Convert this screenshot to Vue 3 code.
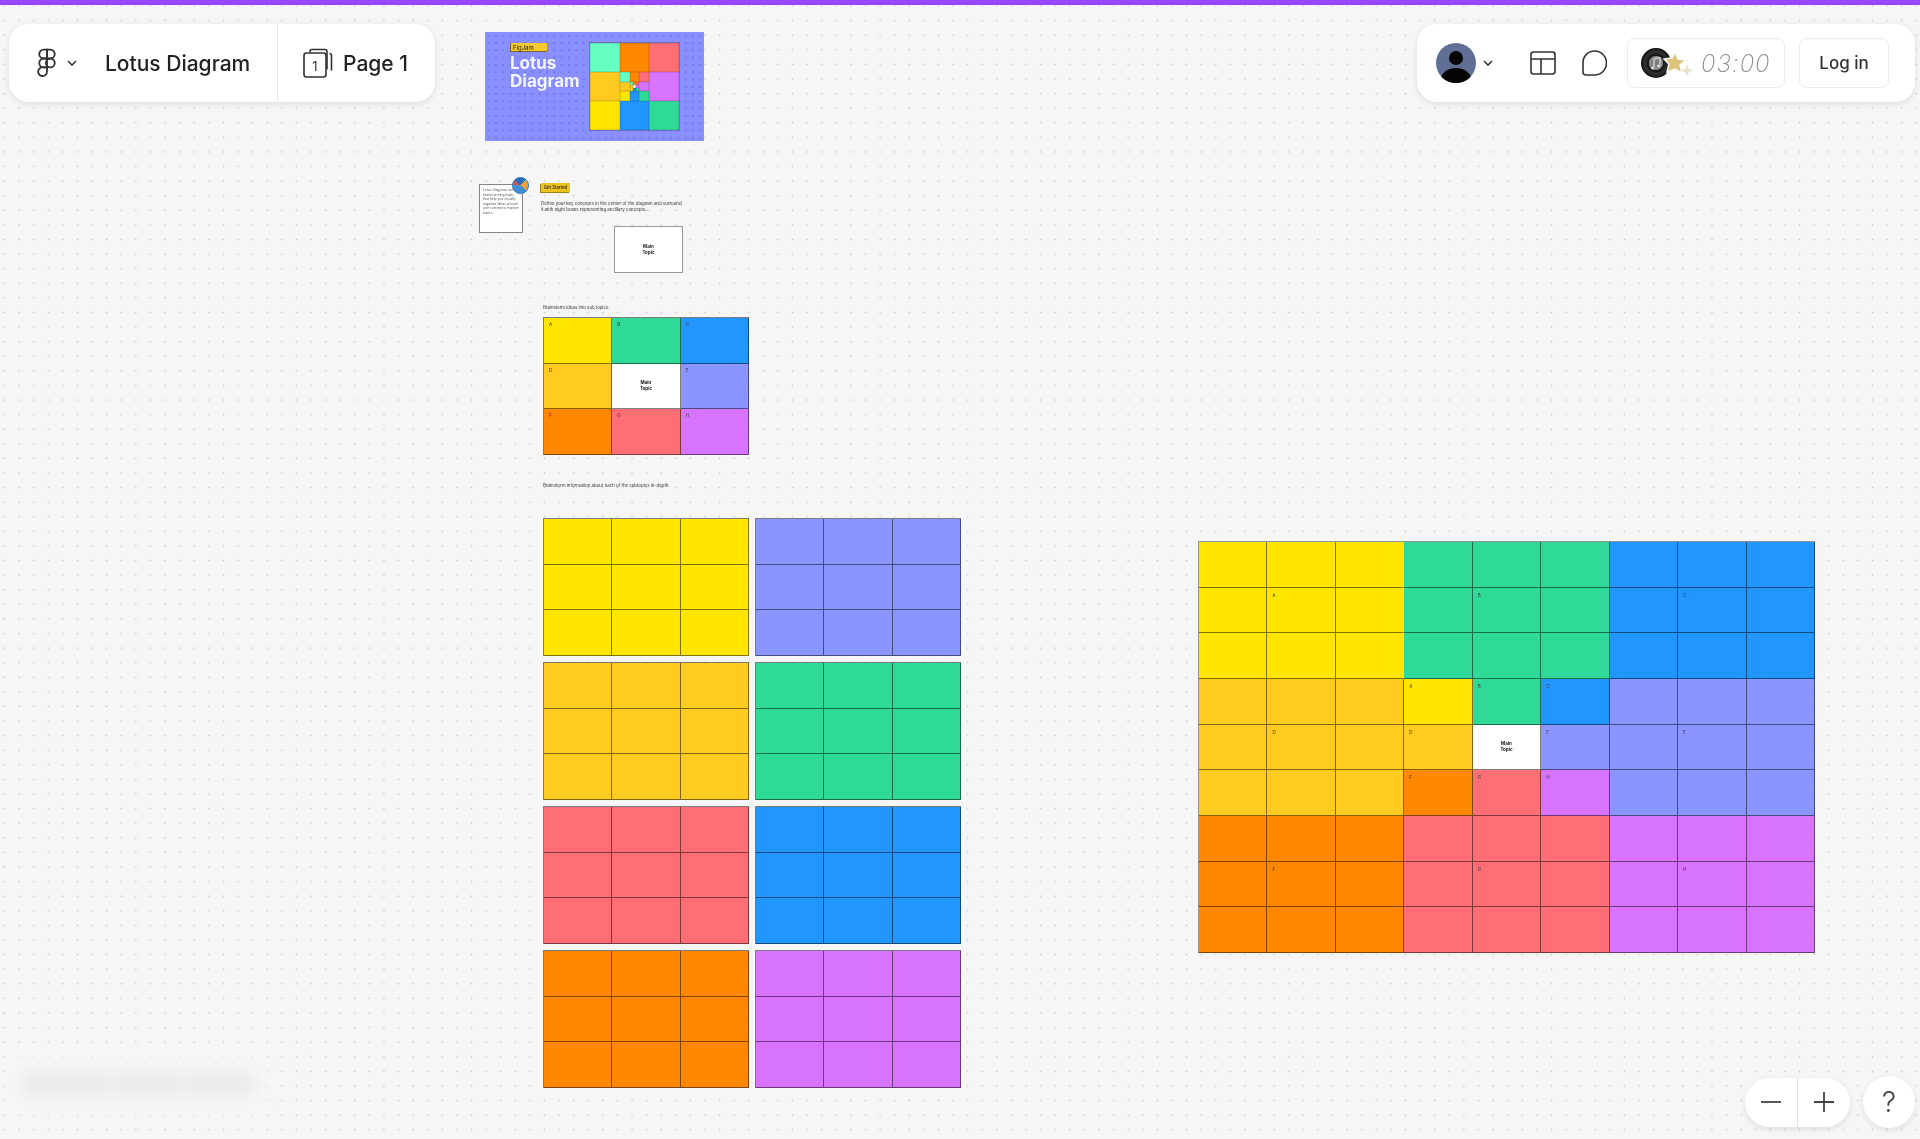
<script setup>
const LAYOUT = [
  ['yellow', 'A'], ['green', 'B'], ['blue', 'C'],
  ['amber', 'D'], ['white', ''], ['peri', 'E'],
  ['orange', 'F'], ['coral', 'G'], ['purple', 'H'],
]

// Starter grid: one 3x3 of labelled tiles.
const starter = LAYOUT.map(([color, label]) => ({ color, label }))

// Left column of blank 3x3 blocks, row by row.
const blocks = ['yellow', 'peri', 'amber', 'green', 'coral', 'blue', 'orange', 'purple']

// Finished 9x9 diagram.
const lotus = []
for (let r = 0; r < 9; r++) {
  for (let c = 0; c < 9; c++) {
    const br = Math.floor(r / 3)
    const bc = Math.floor(c / 3)
    const isCenterBlock = br === 1 && bc === 1
    const entry = isCenterBlock ? LAYOUT[(r - 3) * 3 + (c - 3)] : LAYOUT[br * 3 + bc]
    const isBlockMiddle = r % 3 === 1 && c % 3 === 1
    lotus.push({
      color: entry[0],
      label: isCenterBlock ? entry[1] : isBlockMiddle ? entry[1] : '',
      main: isCenterBlock && entry[0] === 'white',
      noRightLine: r < 3 && c === 2,
    })
  }
}

const mosaic = ['teal', 'orange', 'coral', 'amber', 'nest', 'purple', 'yellow', 'blue', 'green']
</script>

<template>
  <div class="page">
    <div class="topline"></div>

    <!-- Canvas items -->
    <div class="thumb">
      <div class="thumb-copy">
        <span class="thumb-tag">FigJam</span>
        <span class="thumb-title">Lotus<br />Diagram</span>
      </div>
      <div class="mos">
        <template v-for="(a, i) in mosaic" :key="i">
          <div v-if="a !== 'nest'" :class="a"></div>
          <div v-else class="mos inner">
            <template v-for="(b, j) in mosaic" :key="j">
              <div v-if="b !== 'nest'" :class="b"></div>
              <div v-else class="mos inner">
                <template v-for="(d, k) in mosaic" :key="k">
                  <div :class="d === 'nest' ? 'white' : d"></div>
                </template>
              </div>
            </template>
          </div>
        </template>
      </div>
    </div>

    <div class="note">
      <p>Lotus Diagrams are brainstorming maps that help you visually organize ideas around one concept to explore topics.</p>
      <span class="note-badge"></span>
    </div>
    <span class="tag">Get Started</span>
    <p class="hint define">Define your key concepts in the center of the diagram and surround<br />it with eight boxes representing ancillary concepts...</p>
    <div class="main-box"><b>Main<br />Topic</b></div>

    <p class="hint sub">Brainstorm ideas into sub topics.</p>
    <div class="grid3 starter">
      <div v-for="c in starter" :key="c.color" class="cell" :class="c.color">
        <span v-if="c.label" class="letter">{{ c.label }}</span>
        <b v-else class="main-label">Main<br />Topic</b>
      </div>
    </div>

    <p class="hint depth">Brainstorm information about each of the subtopics in-depth.</p>
    <div class="blocks">
      <div v-for="b in blocks" :key="b" class="grid3 block">
        <div v-for="n in 9" :key="n" class="cell" :class="b"></div>
      </div>
    </div>

    <div class="lotus">
      <div
        v-for="(c, i) in lotus"
        :key="i"
        class="lcell"
        :class="[c.color, { open: c.noRightLine }]"
      >
        <b v-if="c.main" class="main-label">Main<br />Topic</b>
        <span v-else-if="c.label" class="letter">{{ c.label }}</span>
      </div>
    </div>

    <div class="smudge">
      <i class="s1"></i><i class="s2"></i><i class="s3"></i>
    </div>

    <!-- Left toolbar -->
    <header class="bar left-bar">
      <div class="file">
        <svg class="figma" viewBox="0 0 24 36" fill="none" stroke="#333" stroke-width="2.2">
          <path d="M12 2H8a5.3 5.3 0 0 0 0 10.6h4z" />
          <path d="M12 2h4a5.3 5.3 0 0 1 0 10.6h-4z" />
          <path d="M12 12.6H8a5.3 5.3 0 0 0 0 10.6h4z" />
          <circle cx="16" cy="17.9" r="5.3" />
          <path d="M8 23.2a5.3 5.3 0 1 0 4 5.1v-5.1z" />
        </svg>
        <svg class="chev" viewBox="0 0 10 6" fill="none" stroke="#333" stroke-width="1.6">
          <path d="M1 1l4 4 4-4" />
        </svg>
        <span class="title">Lotus Diagram</span>
      </div>
      <div class="pages">
        <svg class="page-ico" viewBox="0 0 30 30" fill="none" stroke="#333" stroke-width="1.6">
          <path d="M7 4.5V3.5a2 2 0 0 1 2-2h13a2 2 0 0 1 2 2v18" />
          <path d="M26.5 5.5a2 2 0 0 1 2 2v15" />
          <rect x="1" y="5" width="22" height="24" rx="2.5" />
          <text x="12" y="23" text-anchor="middle" class="page-num">1</text>
        </svg>
        <span class="title">Page 1</span>
      </div>
    </header>

    <!-- Right toolbar -->
    <header class="bar right-bar">
      <div class="avatar-wrap">
        <svg class="avatar" viewBox="0 0 40 40">
          <defs>
            <clipPath id="av"><circle cx="20" cy="20" r="20" /></clipPath>
          </defs>
          <circle cx="20" cy="20" r="20" fill="#5f6f96" />
          <g clip-path="url(#av)">
            <circle cx="20" cy="15" r="7" fill="#050505" />
            <ellipse cx="20" cy="36" rx="15" ry="11" fill="#050505" />
          </g>
        </svg>
        <svg class="chev" viewBox="0 0 10 6" fill="none" stroke="#333" stroke-width="1.6">
          <path d="M1 1l4 4 4-4" />
        </svg>
      </div>
      <svg class="tool layout" viewBox="0 0 26 24" fill="none" stroke="#333" stroke-width="1.6">
        <rect x="1" y="1" width="24" height="22" rx="2.5" />
        <path d="M1 8h24M11 8v15" />
      </svg>
      <svg class="tool chat" viewBox="0 0 26 26" fill="none" stroke="#333" stroke-width="1.6">
        <path d="M13.5 1a11.5 11.5 0 1 1 0 24H5a3 3 0 0 1-3-3v-9.500A11.500 11.500 0 0 1 13.500 1z" />
      </svg>
      <div class="timer">
        <svg class="disc" viewBox="0 0 56 32">
          <defs>
            <radialGradient id="vinyl">
              <stop offset="0" stop-color="#777" />
              <stop offset=".45" stop-color="#888" />
              <stop offset=".5" stop-color="#111" />
              <stop offset=".75" stop-color="#333" />
              <stop offset="1" stop-color="#0a0a0a" />
            </radialGradient>
          </defs>
          <circle cx="15" cy="16" r="15" fill="url(#vinyl)" />
          <path d="M13 21v-9l6-1.500v8" fill="none" stroke="#ddd" stroke-width="1.200" />
          <circle cx="11.500" cy="21" r="1.500" fill="#ddd" />
          <circle cx="17.500" cy="19" r="1.500" fill="#ddd" />
          <path d="M34 5l3 7 8 1-6 5 2 8-7-4-8 3 2-8-5-5 8-1z" fill="#dcc27b" stroke="#fff" stroke-width="1.500" />
          <path d="M46 18l1.500 4 4 1.500-4 1.500-1.500 4-1.500-4-4-1.500 4-1.500z" fill="#eee3c5" stroke="#ddd" stroke-width=".6" />
        </svg>
        <span class="clock">03:00</span>
      </div>
      <button class="login" type="button">Log in</button>
    </header>

    <!-- Zoom controls -->
    <div class="zoomer">
      <div class="zoom-pill">
        <span class="zoom-btn">
          <svg viewBox="0 0 20 20" stroke="#444" stroke-width="1.800"><path d="M0 10h20" /></svg>
        </span>
        <span class="zoom-btn">
          <svg viewBox="0 0 20 20" stroke="#444" stroke-width="1.800"><path d="M0 10h20M10 0v20" /></svg>
        </span>
      </div>
      <span class="help">?</span>
    </div>
  </div>
</template>

<style scoped>
.page {
  position: relative;
  width: 1920px;
  height: 1139px;
  overflow: hidden;
  background-color: #f6f6f6;
  background-image: radial-gradient(circle at center, #c4c4c4 0, #c4c4c4 .6px, transparent 1.1px);
  background-size: 14.6px 14.6px;
  background-position: -2.8px -1.3px;
  font-family: Inter, "Liberation Sans", sans-serif;
  color: #222;
  filter: blur(.6px);
}
.topline {
  height: 5px;
  background: #9747ff;
}

/* palette */
.yellow { background: #ffe500; }
.green { background: #2fda98; }
.blue { background: #2196ff; }
.amber { background: #ffcb20; }
.peri { background: #8a95ff; }
.orange { background: #ff8800; }
.coral { background: #ff6d75; }
.purple { background: #d873ff; }
.white { background: #fff; }
.teal { background: #66ffc4; }

/* thumbnail */
.thumb {
  position: absolute;
  left: 485px;
  top: 32px;
  width: 219px;
  height: 109px;
  box-sizing: border-box;
  padding: 11px 25px 10px 25px;
  display: flex;
  justify-content: space-between;
  background-color: #8a8fff;
  background-image: radial-gradient(circle at center, #6f74e6 0, #6f74e6 .6px, transparent 1px);
  background-size: 7.300px 7.300px;
}
.thumb-copy {
  display: flex;
  flex-direction: column;
  align-items: flex-start;
}
.thumb-tag {
  width: 37px;
  height: 9px;
  line-height: 9px;
  padding-left: 2px;
  box-sizing: border-box;
  font-size: 6px;
  background: #f4c92c;
  border: 1px solid #77653a;
  border-width: 0 0 1px 1px;
}
.thumb-title {
  margin-top: 2px;
  color: #fff;
  font-size: 17px;
  line-height: 18px;
  font-weight: 700;
  opacity: .9;
}
.mos {
  width: 89px;
  height: 87px;
  display: grid;
  grid-template-columns: repeat(3, 1fr);
  grid-template-rows: repeat(3, 1fr);
  outline: 1px solid rgba(60, 60, 90, .35);
}
.mos > div {
  min-width: 0;
  box-shadow: inset 0 0 0 .5px rgba(0, 0, 0, .2);
}
.mos.inner {
  width: auto;
  height: auto;
  outline: none;
}

/* getting-started items */
.note {
  position: absolute;
  left: 479px;
  top: 184px;
  width: 44px;
  height: 49px;
  box-sizing: border-box;
  padding: 3px 3px;
  background: #fff;
  border: 1.5px solid #858585;
}
.note p {
  margin: 0;
  font-size: 3.300px;
  line-height: 4.500px;
  opacity: .75;
}
.note-badge {
  position: absolute;
  right: -7px;
  top: -8px;
  width: 15px;
  height: 15px;
  border-radius: 50%;
  background: conic-gradient(from 40deg, #e9a23b 0 25%, #3f8ed8 25% 65%, #d1584d 65% 75%, #2b6cb8 75%);
  border: 1px solid #2b6cb8;
}
.tag {
  position: absolute;
  left: 541px;
  top: 183px;
  width: 29px;
  height: 9px;
  line-height: 9px;
  text-align: center;
  font-size: 4.300px;
  font-weight: 500;
  background: #eec21e;
  box-shadow: -1px 1px 0 #9d8420;
}
.hint {
  position: absolute;
  margin: 0;
  font-size: 4.400px;
  line-height: 6px;
  color: #333;
  white-space: nowrap;
}
.define { left: 541px; top: 201px; }
.sub { left: 543px; top: 303px; font-size: 4.300px; margin-top: 2px; }
.depth { left: 543px; top: 483px; }
.main-box {
  position: absolute;
  left: 614px;
  top: 226px;
  width: 69px;
  height: 47px;
  box-sizing: border-box;
  display: flex;
  align-items: center;
  justify-content: center;
  background: #fff;
  border: 1.5px solid #999;
  font-size: 4.500px;
  line-height: 5.500px;
  text-align: center;
}

/* 3x3 grids */
.grid3 {
  display: grid;
  grid-template-columns: repeat(3, 1fr);
  grid-template-rows: repeat(3, 1fr);
  box-sizing: border-box;
  width: 206px;
  height: 138px;
  border-top: 1px solid rgba(0, 0, 0, .5);
  border-left: 1px solid rgba(0, 0, 0, .5);
}
.starter {
  position: absolute;
  left: 543px;
  top: 317px;
}
.cell {
  position: relative;
  box-sizing: border-box;
  border-right: 1px solid rgba(0, 0, 0, .5);
  border-bottom: 1px solid rgba(0, 0, 0, .5);
  display: flex;
  align-items: center;
  justify-content: center;
}
.letter {
  position: absolute;
  left: 5px;
  top: 4px;
  font-size: 4.500px;
  line-height: 5px;
  color: #333;
}
.main-label {
  font-size: 4.500px;
  line-height: 5.500px;
  text-align: center;
  color: #111;
}
.blocks {
  position: absolute;
  left: 543px;
  top: 518px;
  width: 418px;
  display: grid;
  grid-template-columns: 206px 206px;
  column-gap: 6px;
  row-gap: 6px;
}

/* finished diagram */
.lotus {
  position: absolute;
  left: 1198px;
  top: 541px;
  width: 617px;
  height: 412px;
  box-sizing: border-box;
  display: grid;
  grid-template-columns: repeat(9, 1fr);
  grid-template-rows: repeat(9, 1fr);
  border-top: 1px solid rgba(0, 0, 0, .4);
  border-left: 1px solid rgba(0, 0, 0, .4);
}
.lcell {
  position: relative;
  box-sizing: border-box;
  border-right: 1px solid rgba(0, 0, 0, .5);
  border-bottom: 1px solid rgba(0, 0, 0, .5);
  display: flex;
  align-items: center;
  justify-content: center;
}
.lcell.open {
  border-right-color: transparent;
}
.lcell .letter {
  left: 5px;
  top: 5px;
}

/* blurred-out footer */
.smudge {
  position: absolute;
  left: 8px;
  top: 1056px;
  width: 258px;
  height: 56px;
  display: flex;
  align-items: center;
  padding-left: 12px;
  box-sizing: border-box;
  background: #f6f6f6;
  filter: blur(8px);
}
.smudge i {
  display: block;
  height: 26px;
  border-radius: 13px;
  background: #ebebeb;
}
.s1 { width: 92px; }
.s2 { width: 72px; }
.s3 { width: 72px; }

/* toolbars */
.bar {
  position: absolute;
  top: 24px;
  height: 78px;
  display: flex;
  align-items: center;
  background: #fff;
  border-radius: 20px;
  box-shadow: 0 2px 6px rgba(0, 0, 0, .1);
}
.left-bar {
  left: 9px;
  width: 426px;
}
.file {
  height: 100%;
  width: 269px;
  box-sizing: border-box;
  padding-left: 28px;
  display: flex;
  align-items: center;
  border-right: 1px solid #e6e6e6;
}
.figma {
  width: 20px;
  height: 30px;
}
.chev {
  width: 10px;
  height: 6px;
  margin-left: 10px;
}
.title {
  font-size: 21px;
  font-weight: 500;
  color: #222;
  white-space: nowrap;
}
.file .title {
  margin-left: 28px;
}
.pages {
  display: flex;
  align-items: center;
  padding-left: 25px;
}
.page-ico {
  width: 30px;
  height: 30px;
  margin-right: 10px;
}
.page-num {
  font-family: Inter, "Liberation Sans", sans-serif;
  font-size: 13px;
  fill: #333;
  stroke: none;
}
.right-bar {
  left: 1417px;
  width: 498px;
  box-sizing: border-box;
  padding-left: 19px;
}
.avatar-wrap {
  display: flex;
  align-items: center;
}
.avatar {
  width: 40px;
  height: 40px;
}
.avatar-wrap .chev {
  margin-left: 7px;
}
.tool {
  flex: none;
}
.layout {
  width: 26px;
  height: 24px;
  margin-left: 37px;
}
.chat {
  width: 26px;
  height: 26px;
  margin-left: 25px;
}
.timer {
  margin-left: 20px;
  width: 158px;
  height: 50px;
  box-sizing: border-box;
  display: flex;
  align-items: center;
  padding-left: 13px;
  border: 1px solid #ececec;
  border-radius: 8px;
}
.disc {
  width: 56px;
  height: 32px;
}
.clock {
  margin-left: 4px;
  font-family: Inter, "Liberation Sans", sans-serif;
  font-weight: 200;
  font-style: italic;
  font-size: 24px;
  letter-spacing: 1px;
  color: #8c8c8c;
}
.login {
  margin-left: 14px;
  width: 90px;
  height: 50px;
  padding: 0;
  background: #fff;
  border: 1px solid #ececec;
  border-radius: 8px;
  font-family: inherit;
  font-size: 17px;
  font-weight: 500;
  color: #333;
}

/* zoom */
.zoomer {
  position: absolute;
  left: 1745px;
  top: 1076px;
  display: flex;
  align-items: center;
  gap: 13px;
}
.zoom-pill {
  width: 105px;
  height: 49px;
  display: grid;
  grid-template-columns: 1fr 1fr;
  background: #fff;
  border-radius: 25px;
  box-shadow: 0 2px 6px rgba(0, 0, 0, .1);
}
.zoom-btn {
  display: flex;
  align-items: center;
  justify-content: center;
}
.zoom-btn:first-child {
  border-right: 1px solid #e2e2e2;
}
.zoom-btn svg {
  width: 20px;
  height: 20px;
}
.help {
  width: 52px;
  height: 52px;
  display: flex;
  align-items: center;
  justify-content: center;
  background: #fff;
  border-radius: 50%;
  box-shadow: 0 2px 6px rgba(0, 0, 0, .1);
  font-size: 28px;
  font-weight: 300;
  color: #444;
}
</style>
